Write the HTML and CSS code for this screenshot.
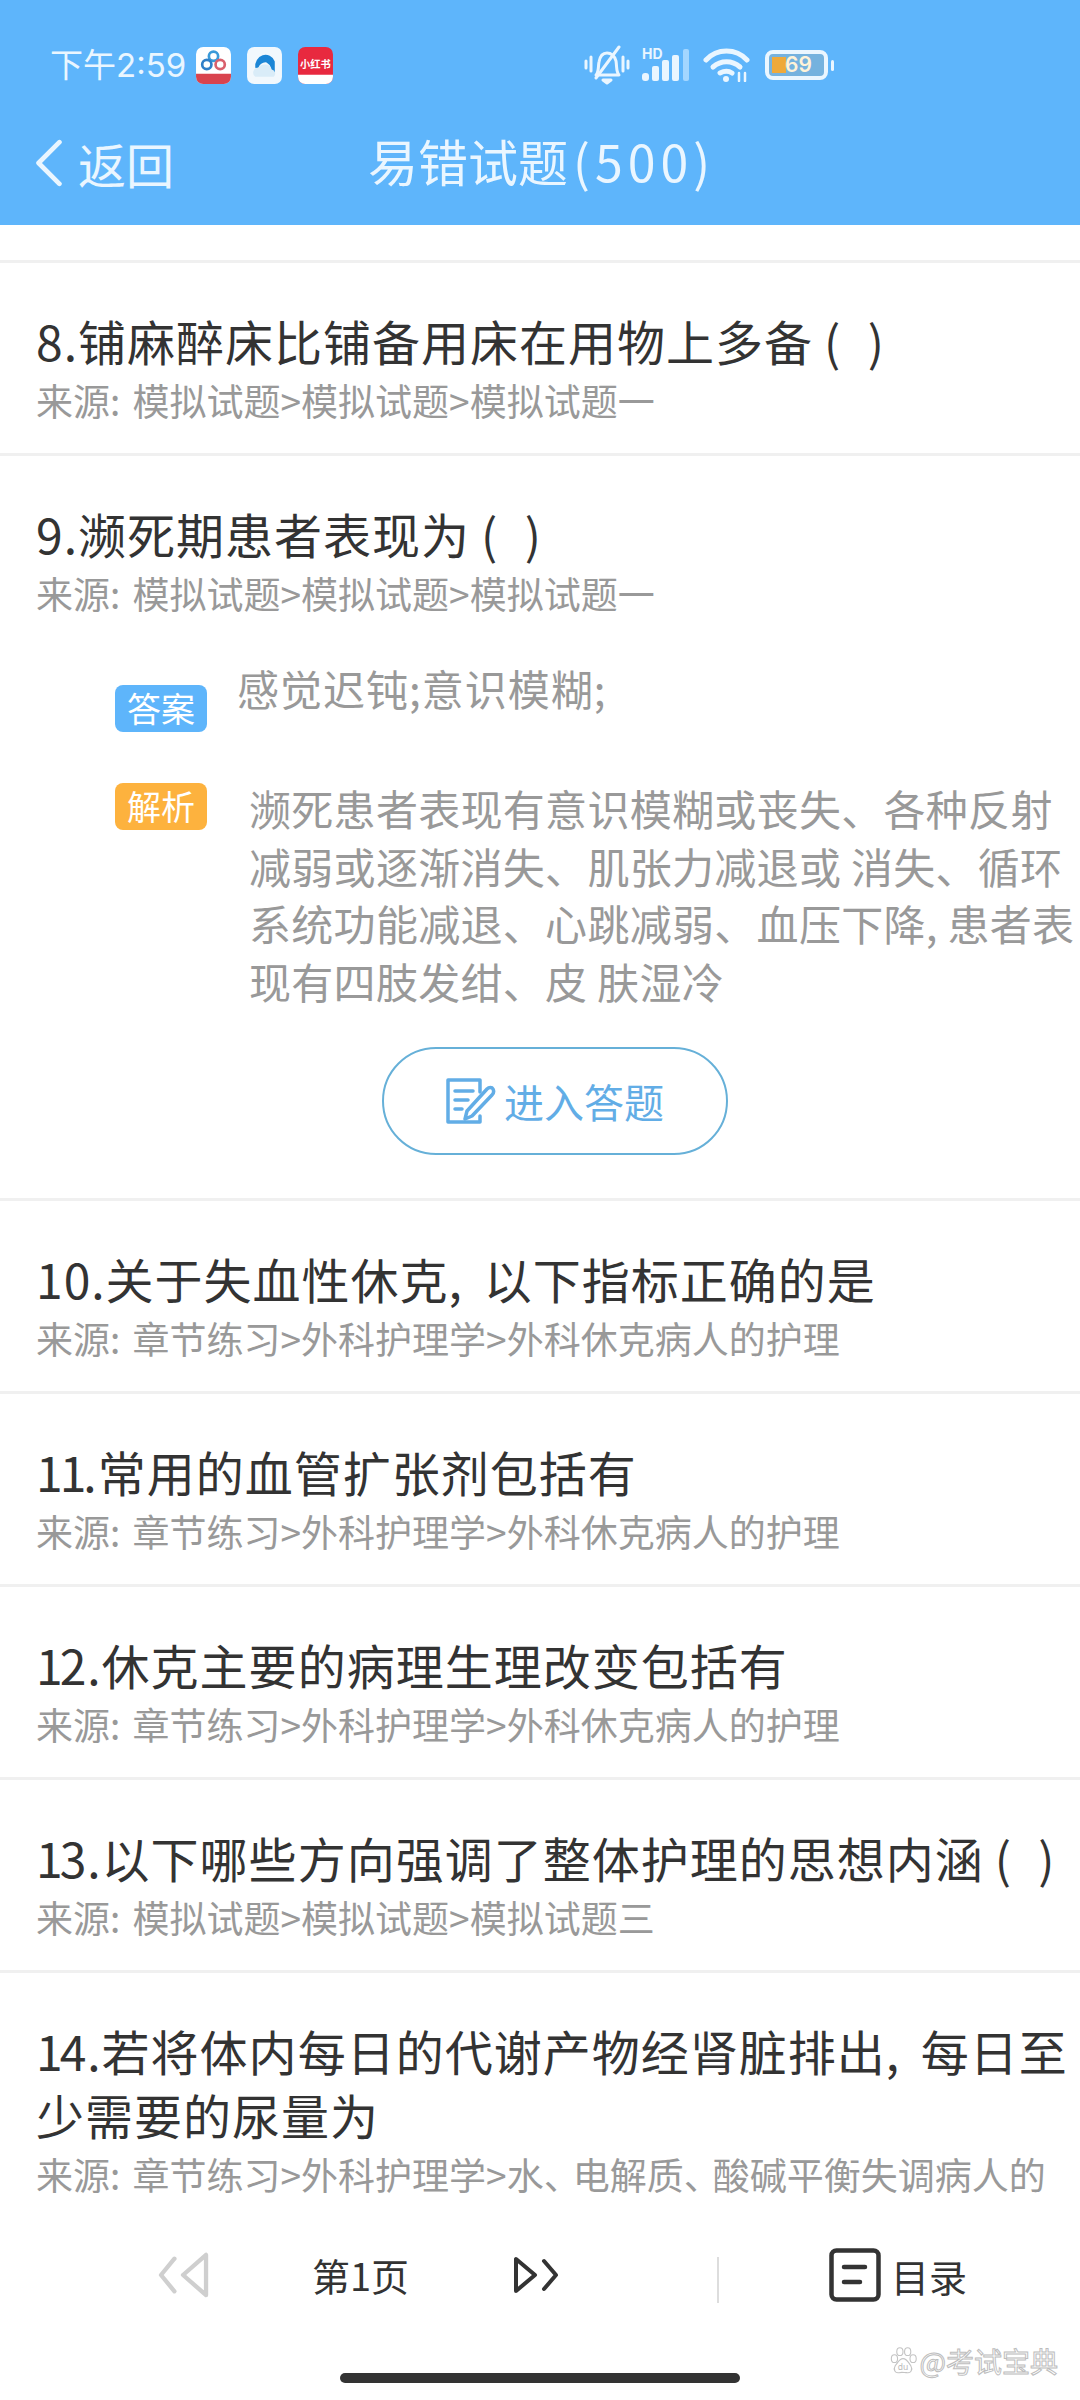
FILE: index.html
```html
<!DOCTYPE html>
<html lang="zh-CN">
<head>
  <meta charset="UTF-8" />
  <meta name="viewport" content="width=device-width, initial-scale=1.0"/>
  <title>易错试题</title>
  <link rel="stylesheet" href="styles.css">
</head>
<body>
  <div class="page">
    <header class="top">
      <div class="statusbar">
        <div class="status-left">
          <span class="clock">下午2:59</span>
          <svg class="app-icon" viewBox="0 0 34 36">
            <rect width="34" height="36" rx="7" fill="#fff"/>
            <path d="M0 26h34v3a7 7 0 0 1-7 7H7a7 7 0 0 1-7-7z" fill="#d9434e"/>
            <circle cx="17" cy="9" r="4.5" fill="none" stroke="#3a9ad9" stroke-width="2.6"/>
            <circle cx="10.5" cy="17" r="4.5" fill="none" stroke="#2f7fc8" stroke-width="2.6"/>
            <circle cx="23.5" cy="17" r="4.5" fill="none" stroke="#d9606c" stroke-width="2.6"/>
          </svg>
          <svg class="app-icon" viewBox="0 0 34 36">
            <rect width="34" height="36" rx="7" fill="#f1f8fd"/>
            <path d="M8 20a10 11 0 0 1 19-6l0 12h-4a9 9 0 0 0-4-11a7 7 0 0 0-8 8z" fill="#1b86d6"/>
            <path d="M8 29a5 5 0 0 1 3-9a7 6 0 0 1 13 2a4 4 0 0 1 2 7z" fill="#d9ecf8"/>
          </svg>
          <svg class="app-icon" viewBox="0 0 34 36">
            <rect width="34" height="36" rx="7" fill="#e8293f"/>
            <path d="M0 27h34v2a7 7 0 0 1-7 7H7a7 7 0 0 1-7-7z" fill="#fff"/>
            <text x="17" y="20" class="app-icon-text" text-anchor="middle">小红书</text>
          </svg>
        </div>
        <div class="status-right">
          <svg class="ico-bell" viewBox="0 0 46 40" fill="none" stroke="#eaf6ff" stroke-width="3" stroke-linecap="round" stroke-linejoin="round">
            <path d="M2 16v7M7 12v14M44 16v7M39 12v14"/>
            <path d="M12 30c3-3 2-8 3-13c1-6 4-9 8-9s8 3 9 8c1 6 0 11 3 14z"/>
            <path d="M35 2L12 33"/>
            <path d="M19 35h8l-4 3z" fill="#eaf6ff"/>
          </svg>
          <div class="signal">
            <span class="hd">HD</span>
            <svg class="ico-signal" viewBox="0 0 48 32">
              <rect x="0" y="24" width="7" height="8" rx="3" fill="#eaf6ff"/>
              <rect x="10" y="17" width="7" height="15" rx="2" fill="#eaf6ff"/>
              <rect x="20" y="11" width="7" height="21" rx="2" fill="#eaf6ff"/>
              <rect x="30" y="6" width="7" height="26" rx="2" fill="#eaf6ff"/>
              <rect x="41" y="0" width="6" height="32" rx="2" fill="#a3d6ff"/>
            </svg>
          </div>
          <svg class="ico-wifi" viewBox="0 0 47 34" fill="none" stroke="#eaf6ff" stroke-width="5" stroke-linecap="round">
            <path d="M3 12C14 0 33 0 44 12"/>
            <path d="M10 19c8-7 19-7 27 0"/>
            <path d="M17 25c4-2 9-2 12 0"/>
            <circle cx="23" cy="31" r="3" fill="#eaf6ff" stroke="none"/>
            <path d="M36 25v8M42 25v8" stroke-width="2.5"/>
          </svg>
          <div class="battery">
            <div class="battery-box">
              <span class="battery-fill"></span>
              <span class="battery-num">69</span>
            </div>
            <span class="battery-cap"></span>
          </div>
        </div>
      </div>
      <div class="navbar">
        <div class="back">
          <svg class="ico-back" viewBox="0 0 30 46" fill="none" stroke="#eaf6ff" stroke-width="4.5" stroke-linecap="round" stroke-linejoin="round"><path d="M25 3L5 23l20 20"/></svg>
          <span>返回</span>
        </div>
        <div class="nav-title">易错试题<span class="nav-num">(500)</span></div>
      </div>
    </header>

    <main class="list">
      <div class="row row-top"></div>
      <div class="row">
        <div class="q">8.铺麻醉床比铺备用床在用物上多备<span class="blank">(&nbsp;&nbsp;)</span></div>
        <div class="src">来源: 模拟试题&gt;模拟试题&gt;模拟试题一</div>
      </div>
      <div class="row row-open">
        <div class="q">9.濒死期患者表现为<span class="blank">(&nbsp;&nbsp;)</span></div>
        <div class="src">来源: 模拟试题&gt;模拟试题&gt;模拟试题一</div>
        <div class="answer">
          <span class="tag tag-blue">答案</span>
          <div class="answer-text">感觉迟钝;意识模糊;</div>
        </div>
        <div class="analysis">
          <span class="tag tag-orange">解析</span>
          <div class="analysis-text">濒死患者表现有意识模糊或丧失、各种反射减弱或逐渐消失、肌张力减退或 消失、循环系统功能减退、心跳减弱、血压下降, 患者表现有四肢发绀、皮 肤湿冷</div>
        </div>
        <div class="enter-wrap">
          <div class="enter-btn">
            <svg class="ico-edit" viewBox="0 0 50 46" fill="none" stroke="#62ade6" stroke-width="3.5" stroke-linejoin="round" stroke-linecap="round">
              <path d="M34 14V2H2v42h32v-6"/>
              <path d="M9 13h18M9 22h13M9 31h7"/>
              <path d="M19 41l2-8L41 11c2-2 5-2 6 0s1 4-1 6L26 38z"/>
            </svg>
            <span>进入答题</span>
          </div>
        </div>
      </div>
      <div class="row">
        <div class="q q-comma">10.关于失血性休克, 以下指标正确的是</div>
        <div class="src">来源: 章节练习&gt;外科护理学&gt;外科休克病人的护理</div>
      </div>
      <div class="row">
        <div class="q"><span class="one">1</span><span class="one">1</span>.常用的血管扩张剂包括有</div>
        <div class="src">来源: 章节练习&gt;外科护理学&gt;外科休克病人的护理</div>
      </div>
      <div class="row">
        <div class="q"><span class="one">1</span>2.休克主要的病理生理改变包括有</div>
        <div class="src">来源: 章节练习&gt;外科护理学&gt;外科休克病人的护理</div>
      </div>
      <div class="row">
        <div class="q"><span class="one">1</span>3.以下哪些方向强调了整体护理的思想内涵<span class="blank">(&nbsp;&nbsp;)</span></div>
        <div class="src">来源: 模拟试题&gt;模拟试题&gt;模拟试题三</div>
      </div>
      <div class="row row-long">
        <div class="q q-comma"><span class="one">1</span>4.若将体内每日的代谢产物经肾脏排出, 每日至少需要的尿量为</div>
        <div class="src">来源: 章节练习&gt;外科护理学&gt;水<span class="tight">、</span>电解质<span class="tight">、</span>酸碱平衡失调病人的</div>
      </div>
    </main>

    <footer class="bottom">
      <div class="pager">
        <svg class="ico-prev" viewBox="0 0 54 48" fill="none" stroke="#cfcfcf" stroke-width="4.5" stroke-linejoin="round" stroke-linecap="round">
          <path d="M50 3v42L26 24z"/>
          <path d="M17 7L3 24l14 17"/>
        </svg>
        <span class="page-num">第1页</span>
        <svg class="ico-next" viewBox="0 0 46 38" fill="none" stroke="#333" stroke-width="4" stroke-linejoin="round" stroke-linecap="round">
          <path d="M3 3v32l19-16z"/>
          <path d="M31 5l12 14L31 33"/>
        </svg>
      </div>
      <span class="divider"></span>
      <div class="catalog">
        <svg class="ico-catalog" viewBox="0 0 52 54" fill="none" stroke="#333" stroke-width="4.5" stroke-linecap="round">
          <rect x="2.5" y="2.5" width="47" height="49" rx="5"/>
          <path d="M15 19h21M15 34h16"/>
        </svg>
        <span>目录</span>
      </div>
    </footer>

    <div class="watermark">
      <svg class="ico-paw" viewBox="0 0 36 36" fill="#fff" stroke="#c4c4c4" stroke-width="1.4">
        <ellipse cx="7" cy="15" rx="4" ry="5"/>
        <ellipse cx="14" cy="6" rx="4" ry="5"/>
        <ellipse cx="24" cy="6" rx="4" ry="5"/>
        <ellipse cx="31" cy="15" rx="4" ry="5"/>
        <path d="M18 15c5 0 7 5 10 9c3 5 0 10-5 9c-3 0-7-1-10 0c-5 1-8-4-5-9c3-3 5-9 10-9z"/>
        <text x="18" y="30" class="paw-text" text-anchor="middle">du</text>
      </svg>
      <span class="mark-text">@考试宝典</span>
    </div>
    <div class="home-bar"></div>
  </div>
</body>
</html>
```

FILE: styles.css
```css
* {
  box-sizing: border-box;
}
body {
  margin: 0;
  background-color: #fff;
  font-family: "Noto Sans CJK SC", "Noto Sans", sans-serif;
  color: #333;
}
.page {
  position: relative;
  width: 1080px;
  height: 2400px;
  display: flex;
  flex-direction: column;
  overflow: hidden;
  background-color: #fff;
}
.top {
  height: 225px;
  flex-shrink: 0;
  background-color: #5eb5fb;
  color: #eaf6ff;
}
.statusbar {
  height: 124px;
  padding: 42px 0 0 50px;
  display: flex;
  align-items: flex-start;
}
.status-left {
  width: 534px;
  display: flex;
  align-items: center;
  height: 46px;
}
.clock {
  font-family: Inter, "Noto Sans CJK SC", sans-serif;
  font-size: 33px;
  line-height: 46px;
  margin-right: 10px;
}
.app-icon {
  width: 35px;
  height: 37px;
  margin-right: 16px;
}
.app-icon-text {
  font-size: 10px;
  fill: #fff;
  font-weight: 700;
}
.status-right {
  display: flex;
  align-items: center;
  height: 46px;
}
.ico-bell {
  width: 46px;
  height: 40px;
  margin-right: 12px;
}
.signal {
  position: relative;
  width: 48px;
  height: 32px;
  margin-right: 13px;
}
.ico-signal {
  display: block;
  width: 48px;
  height: 32px;
}
.hd {
  position: absolute;
  left: 0;
  top: -2px;
  font-family: Inter, sans-serif;
  font-size: 14px;
  line-height: 14px;
  font-weight: 700;
}
.ico-wifi {
  width: 47px;
  height: 34px;
  margin-right: 15px;
}
.battery {
  display: flex;
  align-items: center;
  gap: 3px;
}
.battery-box {
  position: relative;
  width: 63px;
  height: 30px;
  border: 4px solid #eaf6ff;
  border-radius: 8px;
  background-color: #75b2de;
}
.battery-fill {
  position: absolute;
  left: 3px;
  top: 3px;
  bottom: 3px;
  width: 14px;
  background-color: #eea93a;
}
.battery-num {
  position: absolute;
  left: 16px;
  top: -2px;
  font-family: Inter, sans-serif;
  font-size: 21px;
  line-height: 26px;
  font-weight: 600;
  color: #fff3d8;
}
.battery-cap {
  width: 3px;
  height: 11px;
  border-radius: 2px;
  background-color: #eaf6ff;
}
.navbar {
  height: 101px;
  display: flex;
  align-items: flex-start;
}
.back {
  width: 368px;
  padding-left: 33px;
  margin-top: 3px;
  display: flex;
  align-items: center;
  height: 72px;
  font-size: 48px;
}
.ico-back {
  width: 32px;
  height: 48px;
  margin-right: 13px;
}
.nav-title {
  font-size: 50px;
  line-height: 72px;
}
.nav-num {
  margin-left: 5px;
  letter-spacing: 5px;
}
.list {
  flex: 1;
  min-height: 0;
  overflow: hidden;
}
.row {
  padding: 45px 0 0 36px;
  height: 193px;
  border-bottom: 3px solid #f0f0f0;
}
.row-top {
  height: 38px;
  padding: 0;
}
.row-open {
  height: 745px;
}
.row-long {
  height: 300px;
  border-bottom: none;
}
.q {
  font-size: 48px;
  line-height: 64px;
  letter-spacing: 1px;
  color: #333;
}
.q-comma {
  word-spacing: 9px;
}
.one {
  letter-spacing: -3px;
}
.blank {
  margin-left: 11px;
  letter-spacing: 2px;
}
.src {
  margin-top: 4px;
  font-size: 37px;
  line-height: 48px;
  word-spacing: 4px;
  color: #999;
}
.tight {
  letter-spacing: -8px;
}
.answer {
  display: flex;
  align-items: flex-start;
  padding: 41px 0 0 79px;
}
.tag {
  flex-shrink: 0;
  width: 92px;
  height: 47px;
  border-radius: 8px;
  font-size: 34px;
  line-height: 46px;
  text-align: center;
  color: #fff;
}
.tag-blue {
  background-color: #5eb5fb;
  margin-top: 27px;
}
.tag-orange {
  background-color: #fdb23e;
}
.answer-text {
  margin-left: 30px;
  font-size: 42px;
  line-height: 60px;
  letter-spacing: 1px;
  color: #999;
}
.analysis {
  display: flex;
  align-items: flex-start;
  padding: 51px 0 0 79px;
}
.analysis-text {
  margin-left: 42px;
  margin-top: -4px;
  width: 831px;
  font-size: 42px;
  line-height: 57.6px;
  letter-spacing: 0.3px;
  color: #999;
}
.enter-wrap {
  display: flex;
  padding-left: 346px;
  margin-top: 38px;
}
.enter-btn {
  width: 346px;
  height: 108px;
  border: 2px solid #66b0d8;
  border-radius: 54px;
  display: flex;
  align-items: center;
  justify-content: center;
  gap: 8px;
  font-size: 40px;
  color: #62ade6;
}
.ico-edit {
  width: 50px;
  height: 46px;
}
.bottom {
  height: 185px;
  flex-shrink: 0;
  padding-top: 30px;
  display: flex;
  align-items: flex-start;
  background-color: #fff;
}
.pager {
  width: 717px;
  height: 60px;
  padding-left: 158px;
  display: flex;
  align-items: center;
  color: #333;
}
.ico-prev {
  width: 52px;
  height: 46px;
}
.ico-next {
  width: 46px;
  height: 38px;
}
.page-num {
  font-size: 38px;
  line-height: 54px;
  margin: 0 104px 0 102px;
}
.divider {
  width: 2px;
  height: 46px;
  margin-top: 12px;
  background-color: #ddd;
}
.catalog {
  margin-left: 110px;
  height: 60px;
  display: flex;
  align-items: center;
  gap: 10px;
  font-size: 38px;
}
.ico-catalog {
  width: 52px;
  height: 54px;
}
.watermark {
  position: absolute;
  right: 22px;
  bottom: 24px;
  display: flex;
  align-items: center;
  gap: 3px;
}
.mark-text {
  font-size: 28px;
  line-height: 30px;
  color: #fff;
  -webkit-text-stroke: 1px #bdbdbd;
}
.ico-paw {
  width: 28px;
  height: 30px;
}
.paw-text {
  font-family: "Noto Sans", sans-serif;
  font-size: 11px;
  fill: #bbb;
  stroke: none;
}
.home-bar {
  position: absolute;
  left: 340px;
  bottom: 17px;
  width: 400px;
  height: 10px;
  border-radius: 5px;
  background-color: #333;
}
```
